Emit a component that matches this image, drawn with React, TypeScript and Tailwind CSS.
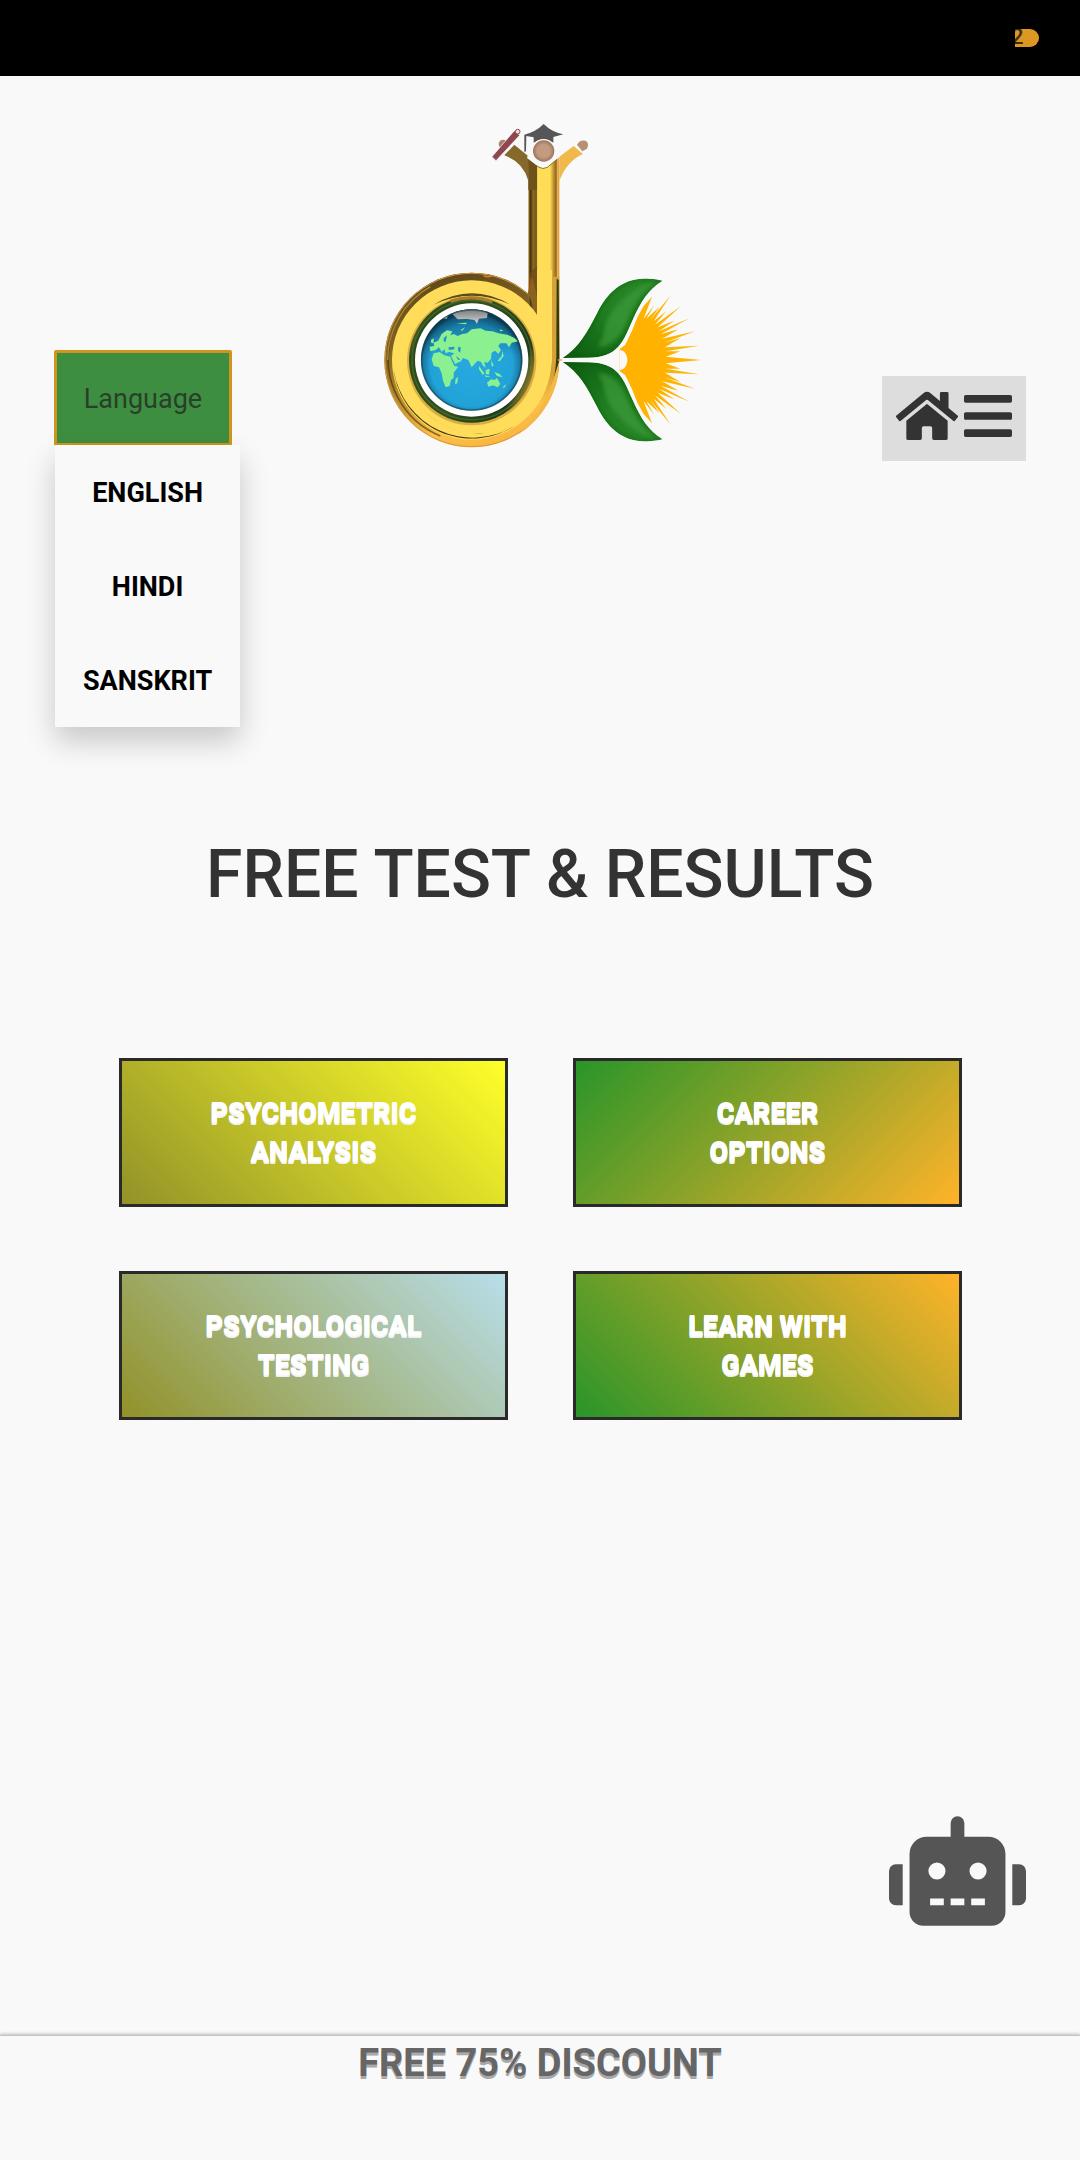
import { FaBars, FaHome, FaRobot } from "react-icons/fa";

const languages = ["ENGLISH", "HINDI", "SANSKRIT"];

const tiles = [
  { lines: ["PSYCHOMETRIC", "ANALYSIS"], fill: "bg-[linear-gradient(45deg,#929229,#ffff29)]" },
  { lines: ["CAREER", "OPTIONS"], fill: "bg-[linear-gradient(135deg,#299529,#ffb329)]" },
  { lines: ["PSYCHOLOGICAL", "TESTING"], fill: "bg-[linear-gradient(45deg,#929229,#b8deea)]" },
  { lines: ["LEARN WITH", "GAMES"], fill: "bg-[linear-gradient(45deg,#299529,#ffb329)]" },
];

const upperRays = [
  [747, 718], [765, 704], [785, 662], [802, 620], [820, 588], [845, 560], [820, 626],
  [852, 586], [828, 626], [868, 590], [840, 630], [901, 556], [850, 634], [888, 604],
  [854, 644], [932, 588], [862, 652], [912, 632], [866, 664], [957, 625], [872, 672],
  [924, 658], [876, 686], [974, 664], [881, 698], [930, 684], [884, 712], [986, 707],
  [886, 724], [930, 724], [886, 740],
];
const sunPoints = [
  ...upperRays,
  [992, 750],
  ...upperRays.map(([x, y]) => [x, 1500 - y]).reverse(),
]
  .map((p) => p.join(","))
  .join(" ");

const leaf =
  "M577,744 C626,712 650,668 680,610 C716,536 774,488 877,512 C832,540 812,574 786,632 C758,694 744,744 650,743 Z";

function Leaf() {
  return (
    <>
      <path d={leaf} fill="url(#leaf)" />
      <path d="M706,640 C740,566 800,528 868,513 C826,536 800,566 776,620 C752,680 732,706 680,712 C700,690 700,660 706,640 Z" fill="#3d9a3a" opacity=".7" filter="url(#soft)" />
      <path d={leaf} fill="none" stroke="#0d5a10" strokeWidth="9" opacity=".55" filter="url(#soft)" />
    </>
  );
}

function Logo() {
  return (
    <svg viewBox="2 3 1020 1050" className="h-[350px] w-[340px]" role="img" aria-label="DK logo">
      <defs>
        <linearGradient id="rim" x1=".3" y1="0" x2=".6" y2="1">
          <stop offset="0" stopColor="#5c461c" />
          <stop offset=".35" stopColor="#846521" />
          <stop offset=".65" stopColor="#c4932f" />
          <stop offset=".85" stopColor="#fcc04a" />
          <stop offset="1" stopColor="#f9b540" />
        </linearGradient>
        <linearGradient id="stem">
          <stop offset="0" stopColor="#c08a2c" />
          <stop offset=".06" stopColor="#3f3010" />
          <stop offset=".16" stopColor="#8a6a20" />
          <stop offset=".26" stopColor="#6f571c" />
          <stop offset=".3" stopColor="#ffdd57" />
          <stop offset=".7" stopColor="#ffdd57" />
          <stop offset=".8" stopColor="#c89a34" />
          <stop offset=".9" stopColor="#8a6420" />
          <stop offset=".93" stopColor="#f3b24a" />
          <stop offset="1" stopColor="#d99a3a" />
        </linearGradient>
        <linearGradient id="inner" x1="0" y1=".2" x2="1" y2=".6">
          <stop offset="0" stopColor="#a98a30" />
          <stop offset=".1" stopColor="#2e4a1c" />
          <stop offset=".5" stopColor="#33501e" />
          <stop offset=".9" stopColor="#1f3a18" />
          <stop offset="1" stopColor="#9a7c2c" />
        </linearGradient>
        <radialGradient id="sea" cx=".5" cy=".55" r=".52">
          <stop offset="0" stopColor="#27a8df" />
          <stop offset=".78" stopColor="#22a3d8" />
          <stop offset=".93" stopColor="#1a76a0" />
          <stop offset="1" stopColor="#0d3c55" />
        </radialGradient>
        <linearGradient id="shade" x1="0" y1="0" x2="0" y2="1">
          <stop offset="0" stopColor="#06324a" stopOpacity=".55" />
          <stop offset=".45" stopColor="#06324a" stopOpacity="0" />
        </linearGradient>
        <linearGradient id="ice" x1="0" y1="0" x2="0" y2="1">
          <stop offset="0" stopColor="#777" />
          <stop offset="1" stopColor="#d4d4d4" />
        </linearGradient>
        <linearGradient id="leaf" x1="0" y1="1" x2="1" y2="0">
          <stop offset="0" stopColor="#0c5a10" />
          <stop offset=".5" stopColor="#207f20" />
          <stop offset="1" stopColor="#2d8a2b" />
        </linearGradient>
        <radialGradient id="face">
          <stop offset=".6" stopColor="#c39b80" />
          <stop offset="1" stopColor="#9a745c" />
        </radialGradient>
        <filter id="soft" x="-20%" y="-20%" width="140%" height="140%">
          <feGaussianBlur stdDeviation="7" />
        </filter>
        <clipPath id="globe">
          <circle cx="304" cy="750" r="152" />
        </clipPath>
        <clipPath id="leafClip">
          <path d={leaf} />
        </clipPath>
      </defs>

      {/* bowl of the letter */}
      <circle cx="304" cy="750" r="262" fill="url(#rim)" />
      <circle cx="304" cy="750" r="260" fill="none" stroke="#d9973a" strokeWidth="3" />
      <path d="M60,690 A250,250 0 0 0 210,978" fill="none" stroke="#3d2e10" strokeWidth="5" opacity=".6" />
      <path d="M52,750 A252,252 0 0 1 180,530" fill="none" stroke="#a98432" strokeWidth="4" />
      <path d="M340,497 Q352,503 366,497" fill="none" stroke="#c97a2a" strokeWidth="6" />

      {/* stem */}
      <path d="M474,146 L500,160 Q518,186 540,160 L567,140 V750 H500 L474,552 Z" fill="url(#stem)" />
      <path d="M474,552 L500,614 V470 L486,480 Z" fill="#73501c" />
      <path d="M480,485 L474,552 L486,570 Z" fill="#a34a18" />
      <circle cx="304" cy="750" r="239" fill="#ffdd5a" />
      <path d="M500,480 H545 V750 A242,242 0 0 1 480,900 L460,760 L500,614 Z" fill="#ffdd5a" />
      <path d="M474,552 L500,614 V560 L486,500 Z" fill="#86641f" />
      <path d="M545,500 H567 V750 Q567,812 536,870 Q548,810 545,750 Z" fill="#d6a138" />
      <path d="M559,506 L565,510 L567,744 Q563,820 536,866 Q556,800 558,740 Z" fill="#2c3b12" />
      <path d="M567,752 A263,263 0 0 1 440,976 Q520,900 545,820 Z" fill="#f6b845" />

      {/* bowl highlights */}
      <path d="M70,780 A236,236 0 0 0 432,948 A240,240 0 0 1 70,780 Z" fill="#3a3210" />
      <path d="M150,890 A238,238 0 0 0 432,948 A236,236 0 0 1 150,890 Z" fill="#5a4a18" />
      <path d="M190,584 Q304,516 420,584 Q304,530 190,584 Z" fill="#5c4a18" />
      <circle cx="304" cy="752" r="194" fill="#d8ae3e" />
      <circle cx="304" cy="750" r="188" fill="url(#inner)" />
      <path d="M240,574 Q304,552 366,576" fill="none" stroke="#a87d2a" strokeWidth="10" />
      <circle cx="304" cy="750" r="179" fill="none" stroke="#517a38" strokeWidth="4" opacity=".6" />
      <circle cx="304" cy="750" r="170" fill="#fff" />

      {/* globe */}
      <circle cx="304" cy="750" r="152" fill="url(#sea)" />
      <g clipPath="url(#globe)">
        <rect x="150" y="596" width="310" height="310" fill="url(#shade)" />
        <path d="M246,612 Q262,600 304,597 Q340,600 352,610 L350,624 L326,626 L320,641 L312,630 L290,627 L262,628 Z M212,626 L234,612 L230,626 Z" fill="url(#ice)" />
        <g fill="#8bf090">
          <path d="M204,692 L214,672 L230,661 L246,664 L240,676 L250,672 L262,678 L276,672 L290,670 L304,658 L330,655 L346,662 L366,664 L384,670 L410,674 L432,684 L444,694 L424,698 L416,712 L408,700 L390,700 L384,708 L392,720 L384,732 L374,722 L364,728 L362,746 L352,758 L342,756 L346,774 L337,766 L332,756 L322,752 L304,772 L294,750 L278,744 L272,754 L254,762 L242,738 L252,730 L236,726 L226,730 L222,718 L214,726 L206,712 L196,720 L180,724 L178,710 L192,708 L190,698 Z" />
          <path d="M190,730 L208,726 L222,736 L240,740 L246,756 L252,768 L264,770 L250,788 L250,804 L242,810 L238,828 L226,832 L218,812 L214,790 L206,772 L190,768 L184,748 Z" />
          <path d="M256,806 L263,800 L261,820 L254,822 Z" />
          <path d="M350,818 L362,808 L372,810 L380,804 L390,822 L382,832 L368,826 L354,830 Z" />
          <path d="M326,768 L342,790 L338,796 L326,778 Z M346,780 L358,776 L356,794 L346,792 Z M372,786 L388,792 L396,802 L380,798 Z M362,750 L370,766 L364,770 Z M344,796 L362,800 L346,801 Z M396,834 L406,822 L404,832 Z M382,752 L394,738 L396,722 L400,738 L388,754 Z M182,690 L190,684 L190,700 L182,698 Z M258,640 L290,638 L286,643 Z M270,660 L284,652 L276,662 Z M388,658 L400,662 L390,664 Z" />
        </g>
        <g fill="#2296cb">
          <path d="M234,712 L252,710 L252,718 L236,720 Z M264,710 L271,712 L270,728 L263,722 Z M220,684 L230,676 L226,696 L220,694 Z M256,738 L270,748 L264,750 Z" />
        </g>
      </g>
      <circle cx="304" cy="750" r="150" fill="none" stroke="#123f50" strokeWidth="5" opacity=".55" />

      {/* graduate */}
      <path d="M432,104 L476,140 L474,212 Q458,156 402,136 Z" fill="#86682a" />
      <path d="M474,140 L500,165 V240 H474 Z" fill="#6e521b" />
      <path d="M567,140 L610,108 L638,132 Q588,154 567,214 Z" fill="#f0b94c" />
      <path d="M470,144 L506,172 Q518,179 531,172 L568,140 L556,100 H484 Z" fill="#f9f9f9" />
      <path d="M498,166 L506,172 Q518,179 531,172 L560,148" fill="none" stroke="#8a742e" strokeWidth="3" />
      <circle cx="398" cy="102" r="13" fill="#ab8268" />
      <path d="M620,104 Q628,88 646,92 Q658,100 650,116 L636,124 Z" fill="#b98f73" />
      <path d="M365,140 L432,62 L448,76 L377,152 Z" fill="#8f4650" stroke="#f9f9f9" strokeWidth="2" />
      <circle cx="442" cy="65" r="7" fill="#f4dcdc" stroke="#8f4650" strokeWidth="3" />
      <path d="M462,74 Q496,66 520,42 Q544,66 579,73 L549,81 V98 Q520,78 490,98 V82 L468,78 L467,124 L462,126 Z" fill="#565656" />
      <circle cx="520" cy="123" r="36" fill="#f9f9f9" />
      <circle cx="520" cy="123" r="32" fill="url(#face)" />

      {/* leaves and sun */}
      <g clipPath="url(#leafClip)">
        <Leaf />
      </g>
      <g transform="matrix(1 0 0 -1 0 1500)">
        <g clipPath="url(#leafClip)">
          <Leaf />
        </g>
      </g>
      <path d="M562,750 H576" stroke="#f5a04a" strokeWidth="4" />
      <polygon points={sunPoints} fill="#ffb300" />
      <path d="M747,718 Q754,722 760,724 A36,36 0 0 1 760,776 Q754,778 747,782 Z" fill="#f9f9f9" />
    </svg>
  );
}

export default function App() {
  return (
    <div className="flex min-h-screen flex-col bg-[#f9f9f9] font-[Roboto,sans-serif] text-[#333]">
      <header className="flex h-[76px] items-center justify-end bg-black pr-[41px]">
        <div className="h-[18px] w-6 overflow-hidden rounded-r-full bg-[#dd9823] text-[22px] leading-4 font-medium text-[#3f2d0c]">
          <span className="-ml-1 block">2</span>
        </div>
      </header>

      <nav className="grid grid-cols-[1fr_auto_1fr] items-end pt-[35px] pr-[54px] pl-[55px]">
        <div className="relative z-10 mb-4 justify-self-start">
          <button
            type="button"
            aria-expanded="true"
            className="block h-[94px] w-44 rounded-[1px] bg-[#3e8e41] pt-0.5 text-[27px] text-[#2a3f2a] outline-3 -outline-offset-2 outline-[#d0951c]"
          >
            Language
          </button>
          <ul className="absolute top-full left-0 bg-[#f9f9f9] text-center text-[27px] font-bold text-black shadow-[0_14px_28px_rgba(0,0,0,0.2)]">
            {languages.map((name) => (
              <li key={name}>
                <a href="#" className="block px-7 pt-0.5 leading-[92px]">
                  {name}
                </a>
              </li>
            ))}
          </ul>
        </div>
        <Logo />
        <div className="flex h-[85px] items-start gap-1.5 justify-self-end bg-[#ddd] px-3.5 pt-3">
          <a href="#" aria-label="Home">
            <FaHome className="h-[56px] w-[62px]" />
          </a>
          <button type="button" aria-label="Menu">
            <FaBars className="h-[56px] w-12" />
          </button>
        </div>
      </nav>

      <main className="flex flex-1 flex-col">
        <h1 className="mt-[374px] text-center text-[66px] leading-[80px] font-medium">
          FREE TEST &amp; RESULTS
        </h1>
        <div className="mt-[143px] grid grid-cols-2 gap-x-[65px] gap-y-16 pr-[118px] pl-[119px]">
          {tiles.map(({ lines, fill }) => (
            <a
              key={lines[0]}
              href="#"
              className="border-3 border-[#2a2a2a] text-center"
            >
              <span
                className={`flex h-[143px] flex-col justify-center text-[27px] leading-[39px] font-black text-white [text-shadow:0_1px_0_#fcfcfc,0_2px_0_#f6f6f6,0_3px_0_#f0f0f0] ${fill}`}
              >
                {lines.map((line) => (
                  <span key={line}>{line}</span>
                ))}
              </span>
            </a>
          ))}
        </div>
        <button type="button" aria-label="Chat assistant" className="mt-auto mr-[54px] mb-[109px] self-end text-[#555]">
          <FaRobot className="h-[110px] w-[137px]" />
        </button>
      </main>

      <footer className="h-[125px] border-t border-[#c4c4c4] bg-[#f9f9f9] text-center text-[38px] leading-[54px] font-bold text-[#666] shadow-[0_-1px_3px_rgba(0,0,0,0.25)] [text-shadow:0_3px_0_#a9a9a9]">
        FREE 75% DISCOUNT
      </footer>
    </div>
  );
}
